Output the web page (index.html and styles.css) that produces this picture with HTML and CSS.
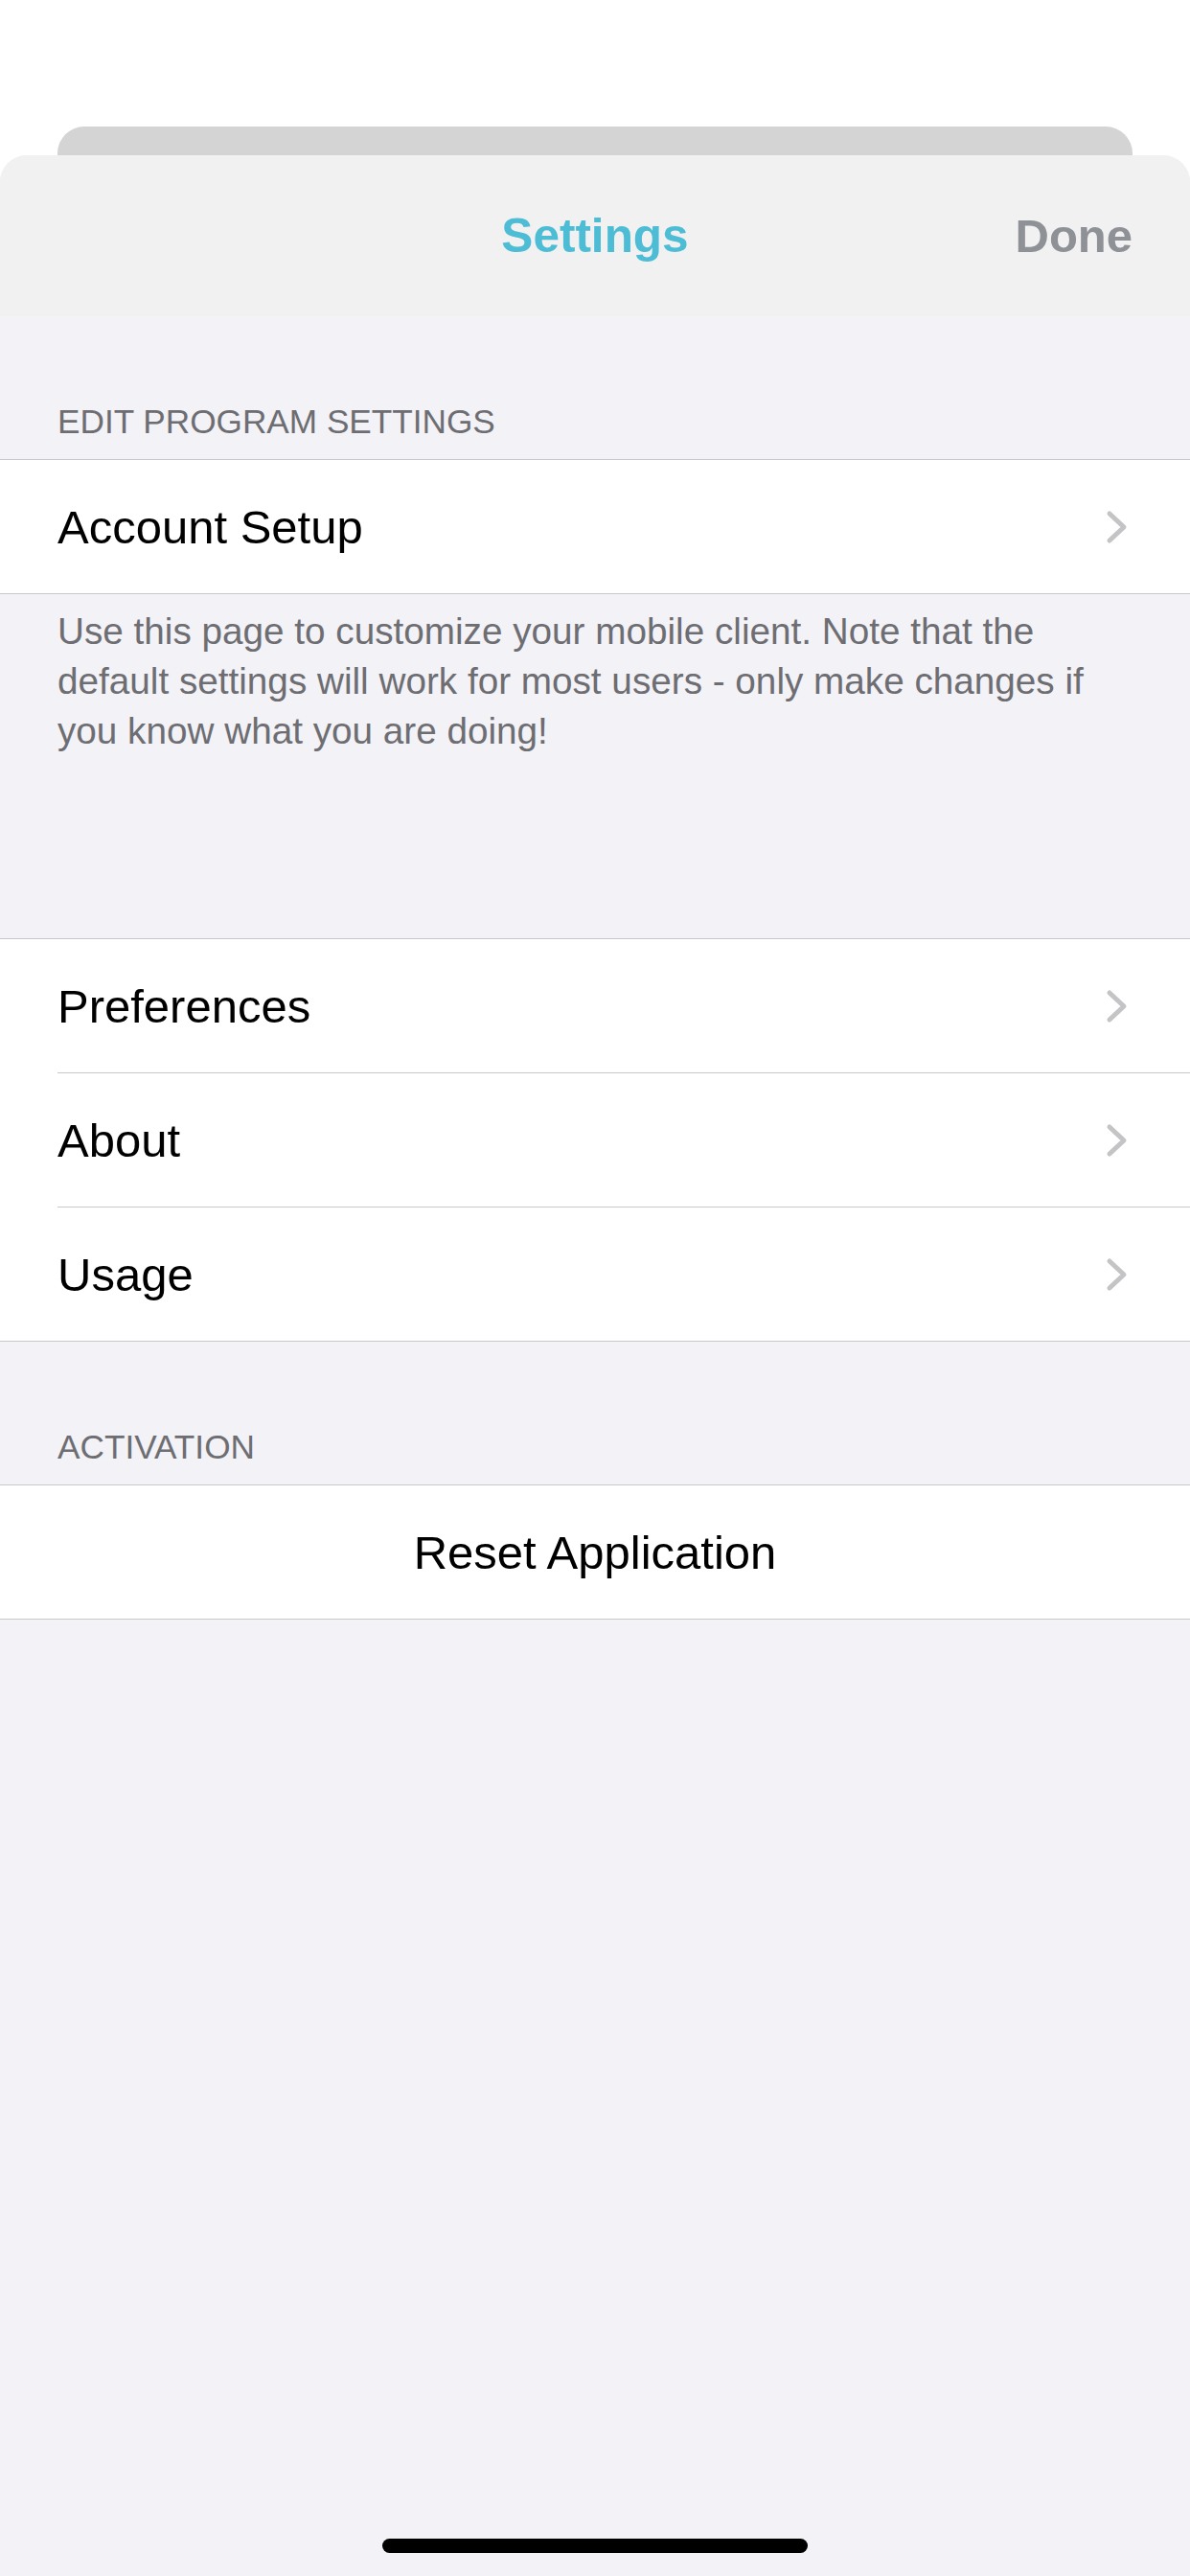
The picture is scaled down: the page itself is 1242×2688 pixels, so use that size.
FILE: index.html
```html
<!DOCTYPE html>
<html lang="en">
<head>
<meta charset="utf-8">
<title>Settings</title>
<link rel="stylesheet" href="styles.css">
</head>
<body>
<div class="screen">
  <div class="backcard"></div>
  <div class="sheet">
    <header class="navbar">
      <span class="nav-spacer"></span>
      <h1 class="nav-title">Settings</h1>
      <span class="nav-done">Done</span>
    </header>

    <div class="section-header">EDIT PROGRAM SETTINGS</div>
    <div class="group">
      <div class="row">
        <span class="row-label">Account Setup</span>
        <svg class="chevron" viewBox="0 0 26 40" width="26" height="40"><path d="M5 6 L20 20 L5 34" /></svg>
      </div>
    </div>
    <p class="section-footer">Use this page to customize your mobile client. Note that the default settings will work for most users - only make changes if you know what you are doing!</p>

    <div class="group">
      <div class="row">
        <span class="row-label">Preferences</span>
        <svg class="chevron" viewBox="0 0 26 40" width="26" height="40"><path d="M5 6 L20 20 L5 34" /></svg>
      </div>
      <div class="row">
        <span class="row-label">About</span>
        <svg class="chevron" viewBox="0 0 26 40" width="26" height="40"><path d="M5 6 L20 20 L5 34" /></svg>
      </div>
      <div class="row">
        <span class="row-label">Usage</span>
        <svg class="chevron" viewBox="0 0 26 40" width="26" height="40"><path d="M5 6 L20 20 L5 34" /></svg>
      </div>
    </div>

    <div class="section-header">ACTIVATION</div>
    <div class="group">
      <div class="row row-center">
        <span class="row-label">Reset Application</span>
      </div>
    </div>
  </div>
  <div class="home-indicator"></div>
</div>
</body>
</html>
```

FILE: styles.css
```css
* {
  box-sizing: border-box;
}

html, body {
  margin: 0;
  padding: 0;
  background: #ffffff;
}

body {
  font-family: "Liberation Sans", Arial, sans-serif;
  color: #000;
}

.screen {
  position: relative;
  width: 1242px;
  height: 2688px;
  overflow: hidden;
  padding-top: 132px;
  background: #ffffff;
}

.backcard {
  margin: 0 60px;
  height: 30px;
  background: #d4d4d4;
  border-radius: 28px 28px 0 0;
}

.sheet {
  background: #f2f2f7;
  border-radius: 28px 28px 0 0;
  overflow: hidden;
  height: 2526px;
}

.navbar {
  height: 168px;
  background: #f1f1f2;
  display: grid;
  grid-template-columns: 1fr auto 1fr;
  align-items: center;
  line-height: 168px;
}

.nav-title {
  margin: 0;
  font-size: 49.5px;
  font-weight: 700;
  color: #4dbcd5;
}

.nav-done {
  justify-self: end;
  padding-right: 60px;
  font-size: 49px;
  font-weight: 700;
  color: #8e9196;
}

.section-header {
  padding: 89px 60px 18px;
  font-size: 35.2px;
  line-height: 42px;
  color: #6d6d72;
}

.group {
  background: #ffffff;
  border-top: 1px solid #c8c7cc;
  border-bottom: 1px solid #c8c7cc;
}

.row {
  margin-left: 60px;
  height: 139px;
  padding-right: 63px;
  display: flex;
  align-items: center;
  justify-content: space-between;
  font-size: 49px;
}

.row + .row {
  height: 140px;
  border-top: 1px solid #c8c7cc;
}

.row-center {
  margin-left: 0;
  padding-right: 0;
  justify-content: center;
}

.chevron {
  display: block;
  fill: none;
  stroke: #c4c4c7;
  stroke-width: 5;
  stroke-linecap: round;
  stroke-linejoin: round;
}

.section-footer {
  margin: 0 0 190px;
  padding: 13px 60px 0;
  font-size: 38.7px;
  line-height: 52px;
  color: #6d6d72;
}

.home-indicator {
  position: absolute;
  left: 399px;
  bottom: 24px;
  width: 444px;
  height: 15px;
  border-radius: 8px;
  background: #000000;
}
```
